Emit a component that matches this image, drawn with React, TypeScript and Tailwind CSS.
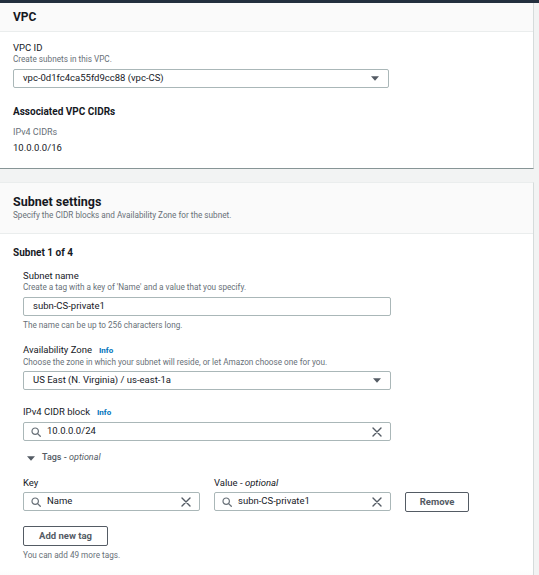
import React from 'react';

const Caret = () => (
  <svg width="8" height="5" viewBox="0 0 8 5" className="shrink-0">
    <path d="M0 0.3h8L4 4.8z" fill="#545b64" />
  </svg>
);

const SearchIcon = () => (
  <svg width="10" height="10" viewBox="0 0 10 10" className="shrink-0">
    <circle cx="4.2" cy="4.2" r="3.2" fill="none" stroke="#687078" strokeWidth="1.2" />
    <path d="M6.6 6.6L9.3 9.3" stroke="#687078" strokeWidth="1.3" strokeLinecap="round" />
  </svg>
);

const ClearIcon = () => (
  <svg width="10" height="10" viewBox="0 0 10 10" className="shrink-0">
    <path d="M1 1L9 9M9 1L1 9" stroke="#545b64" strokeWidth="1.4" strokeLinecap="round" />
  </svg>
);

const Info = () => (
  <span className="ml-[7px] text-[8px] font-bold text-[#0073bb]">Info</span>
);

const Label = ({ children }: { children: React.ReactNode }) => (
  <div className="text-[9.5px] leading-[12px] text-[#16191f]">{children}</div>
);

const Desc = ({ children }: { children: React.ReactNode }) => (
  <div className="text-[8.2px] leading-[10px] text-[#687078]">{children}</div>
);

const Select = ({ value, className }: { value: string; className: string }) => (
  <div
    className={`flex h-[19px] items-center justify-between rounded-[2px] border border-[#aab7b8] bg-white pl-[9px] pr-[9px] ${className}`}
  >
    <span className="text-[9.5px] text-[#16191f]">{value}</span>
    <Caret />
  </div>
);

const SearchInput = ({ value, className }: { value: string; className: string }) => (
  <div
    className={`flex h-[19px] items-center rounded-[2px] border border-[#aab7b8] bg-white pl-[7px] pr-[8px] ${className}`}
  >
    <SearchIcon />
    <span className="ml-[6px] flex-1 text-[9.5px] text-[#16191f]">{value}</span>
    <ClearIcon />
  </div>
);

const Button = ({ children, className }: { children: React.ReactNode; className: string }) => (
  <div
    className={`flex h-[20px] items-center justify-center rounded-[2px] border border-[#545b64] bg-white text-[9.5px] font-bold text-[#545b64] ${className}`}
  >
    {children}
  </div>
);

export default function App() {
  return (
    <div className="h-[575px] w-full overflow-hidden bg-[#f2f3f3] font-['Roboto',sans-serif]">
      <div className="h-[3px] bg-[#232f3e]" />

      {/* VPC card */}
      <div className="mr-[5px] border-r border-b border-r-[#d5dbdb] border-b-[#879596] bg-white">
        <div className="flex h-[29px] items-center border-b border-[#eaeded] bg-[#fafafa] px-[13px]">
          <h2 className="text-[12px] font-bold text-[#16191f]">VPC</h2>
        </div>
        <div className="px-[13px] pt-[10px] pb-[14px]">
          <Label>VPC ID</Label>
          <Desc>Create subnets in this VPC.</Desc>
          <Select value="vpc-0d1fc4ca55fd9cc88 (vpc-CS)" className="mt-[5px] w-[376px]" />
          <div className="mt-[17px] text-[10px] font-bold leading-[14px] text-[#16191f]">
            Associated VPC CIDRs
          </div>
          <div className="mt-[7px] text-[9px] leading-[12px] text-[#687078]">IPv4 CIDRs</div>
          <div className="mt-[4px] text-[9.5px] leading-[12px] text-[#16191f]">10.0.0.0/16</div>
        </div>
      </div>

      {/* Subnet settings card */}
      <div className="mt-[13px] mr-[5px] border-r border-t border-r-[#d5dbdb] border-t-[#eaeded] bg-white">
        <div className="border-b border-[#eaeded] bg-[#fafafa] px-[13px] pt-[11px] pb-[13px]">
          <h2 className="text-[12.5px] font-bold leading-[16px] text-[#16191f]">Subnet settings</h2>
          <Desc>Specify the CIDR blocks and Availability Zone for the subnet.</Desc>
        </div>
        <div className="px-[13px] pt-[12px] pb-[10px]">
          <div className="text-[10px] font-bold leading-[14px] text-[#16191f]">Subnet 1 of 4</div>
          <div className="pl-[10px]">
            <div className="mt-[10px]">
              <Label>Subnet name</Label>
              <Desc>Create a tag with a key of 'Name' and a value that you specify.</Desc>
              <div className="mt-[5px] flex h-[19px] w-[368px] items-center rounded-[2px] border border-[#aab7b8] bg-white pl-[9px] text-[9.5px] text-[#16191f]">
                subn-CS-private1
              </div>
              <div className="mt-[4px]">
                <Desc>The name can be up to 256 characters long.</Desc>
              </div>
            </div>

            <div className="mt-[14px]">
              <Label>
                Availability Zone
                <Info />
              </Label>
              <Desc>Choose the zone in which your subnet will reside, or let Amazon choose one for you.</Desc>
              <Select value="US East (N. Virginia) / us-east-1a" className="mt-[4px] w-[368px]" />
            </div>

            <div className="mt-[16px]">
              <Label>
                IPv4 CIDR block
                <Info />
              </Label>
              <SearchInput value="10.0.0.0/24" className="mt-[3px] w-[368px]" />
            </div>

            <div className="mt-[11px] flex h-[12px] items-center pl-[4px] text-[9px] text-[#545b64]">
              <Caret />
              <span className="ml-[7px] font-medium">
                Tags - <i className="font-normal">optional</i>
              </span>
            </div>

            <div className="mt-[13px] flex items-end gap-[14px]">
              <div className="w-[177px]">
                <Label>Key</Label>
                <SearchInput value="Name" className="mt-[3px] w-[177px]" />
              </div>
              <div className="w-[177px]">
                <Label>
                  Value - <i>optional</i>
                </Label>
                <SearchInput value="subn-CS-private1" className="mt-[3px] w-[177px]" />
              </div>
              <Button className="mb-[-1px] w-[64px]">Remove</Button>
            </div>

            <Button className="mt-[15px] w-[85px]">Add new tag</Button>
            <div className="mt-[4px]">
              <Desc>You can add 49 more tags.</Desc>
            </div>
          </div>
        </div>
        <div className="h-[20px] bg-gradient-to-b from-white to-[#f5f5f5]" />
      </div>
    </div>
  );
}
